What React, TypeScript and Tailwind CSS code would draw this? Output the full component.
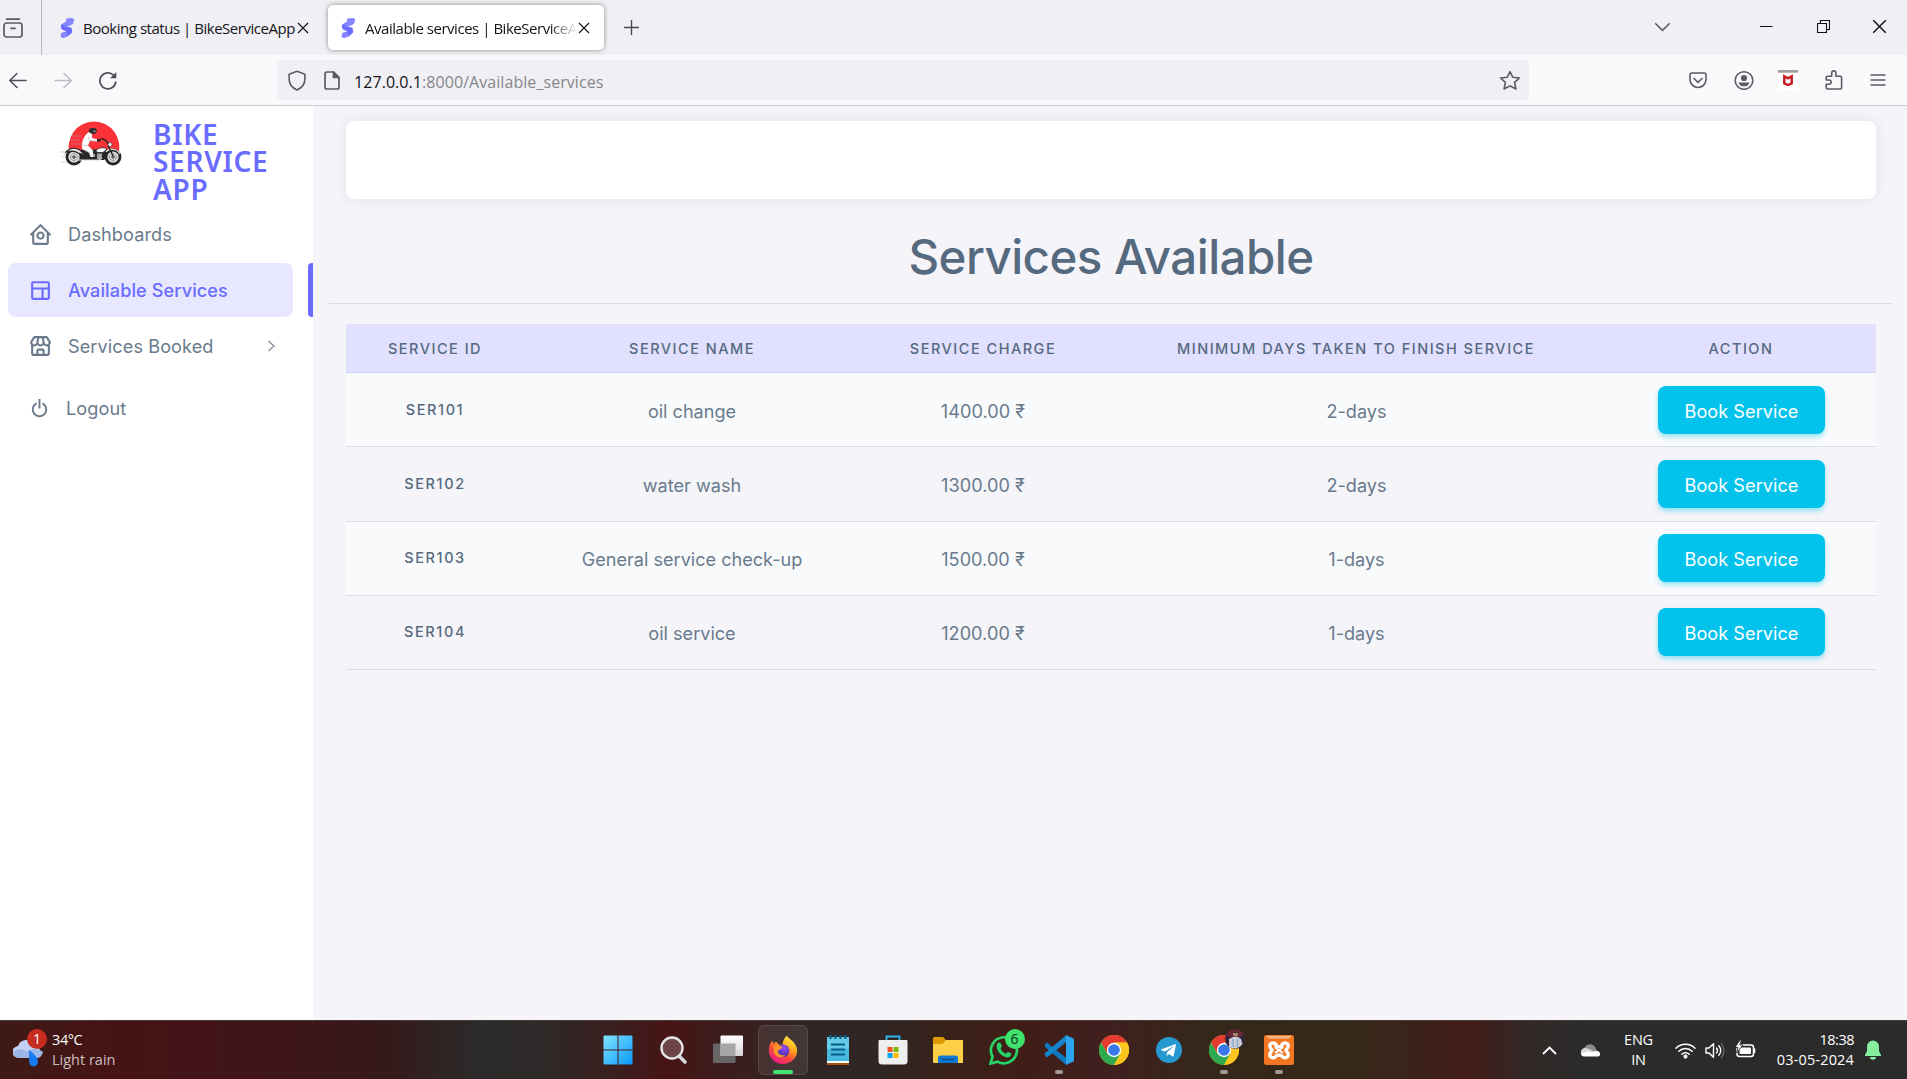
import type { ReactNode } from 'react';
import { BiHomeCircle, BiLayout, BiStore, BiPowerOff } from 'react-icons/bi';
import { FaTelegramPlane } from 'react-icons/fa';

const services = [
  { id: 'SER101', name: 'oil change', charge: '1400.00 ₹', days: '2-days' },
  { id: 'SER102', name: 'water wash', charge: '1300.00 ₹', days: '2-days' },
  { id: 'SER103', name: 'General service check-up', charge: '1500.00 ₹', days: '1-days' },
  { id: 'SER104', name: 'oil service', charge: '1200.00 ₹', days: '1-days' },
];

const columns = 'grid grid-cols-[178px_336px_246px_500px_270px] text-center';

function Favicon() {
  return (
    <svg className="h-5 w-[15px] shrink-0" viewBox="0 0 15 20">
      <path d="M6.2 0.6 12.3 0 14.4 1.6 12.9 6.1 8 8.6 1.2 9.5 1.6 6.2 6 3.6Z" fill="#8587ff" />
      <path d="M1.3 6.2 6 8.6 11.5 9.8 12.3 14.3 8.4 18 2.9 20 0.6 18.5 1.5 14.9 6.6 13.6 2 11.6 0.7 9Z" fill="#696cff" />
      <path d="M1.5 14.9 6 13.6 8.4 18 2.9 20 0.6 18.5Z" fill="#8587ff" />
    </svg>
  );
}

function CloseX({ size = 10 }: { size?: number }) {
  return (
    <svg width={size + 2} height={size + 2} viewBox="0 0 12 12" fill="none" stroke="#15141a" strokeWidth="1.2">
      <path d="M1 1 11 11M11 1 1 11" />
    </svg>
  );
}

function TabBar() {
  return (
    <div className="flex h-[55px] items-center bg-[#f0f0f4]">
      <div className="flex h-full w-[42px] shrink-0 items-center border-r border-[#b9b9be] pl-[3px]">
        <svg width="20" height="20" viewBox="0 0 20 20" fill="none" stroke="#5b5b66" strokeWidth="1.7" strokeLinecap="round">
          <path d="M3.6 1.2H16.4" />
          <rect x="1" y="5" width="18" height="14" rx="2.5" />
          <path d="M8 10.3H12" />
        </svg>
      </div>
      <div className="ml-[18px] flex h-[45px] w-[268px] items-center text-[15px] tracking-[-0.47px] text-[#15141a]">
        <Favicon />
        <span className="ml-[8px] w-[214px] whitespace-nowrap pt-px">Booking status | BikeServiceApp</span>
        <CloseX />
      </div>
      <div className="flex h-[45px] w-[276px] items-center rounded-[5px] bg-white pl-[13px] text-[15px] tracking-[-0.47px] text-[#15141a] shadow-[0_0_5px_rgba(0,0,0,0.42)]">
        <Favicon />
        <span className="ml-[9px] w-[213px] overflow-hidden whitespace-nowrap pt-px [mask-image:linear-gradient(to_right,black_185px,transparent_212px)]">
          Available services | BikeServiceApp
        </span>
        <CloseX />
      </div>
      <svg className="ml-[19px]" width="17" height="17" viewBox="0 0 17 17" fill="none" stroke="#4a4a55" strokeWidth="1.4">
        <path d="M8.5 1V16M1 8.5H16" />
      </svg>
      <div className="ml-auto flex h-[53px] items-center self-start pr-5">
        <svg className="mr-[89px]" width="17" height="10" viewBox="0 0 17 10" fill="none" stroke="#5b5b66" strokeWidth="1.5">
          <path d="M1.2 1.2 8.5 8.4 15.8 1.2" />
        </svg>
        <svg className="mr-[44px]" width="13" height="13" viewBox="0 0 13 13" stroke="#111">
          <path d="M0 6.5H12.5" />
        </svg>
        <svg className="mr-[42px]" width="13" height="13" viewBox="0 0 13 13" fill="none" stroke="#111" strokeWidth="1.1">
          <path d="M.5 3.5H9.5V12.5H.5ZM3.5 3.5V.5H12.5V9.5H9.5" />
        </svg>
        <CloseX size={13} />
      </div>
    </div>
  );
}

function Toolbar() {
  return (
    <div className="flex h-[51px] items-center border-b border-[#c8c8ce] bg-[#f9f9fb] pl-2">
      <svg width="20" height="20" viewBox="0 0 20 20" fill="none" stroke="#4f4f5a" strokeWidth="1.6" strokeLinecap="round" strokeLinejoin="round">
        <path d="M18 10.5H2M9 3.5 1.8 10.5 9 17.5" />
      </svg>
      <svg className="ml-[25px]" width="20" height="20" viewBox="0 0 20 20" fill="none" stroke="#bcbcc2" strokeWidth="1.6" strokeLinecap="round" strokeLinejoin="round">
        <path d="M2 10.5H18M11 3.5 18.2 10.5 11 17.5" />
      </svg>
      <svg className="ml-[25px]" width="20" height="20" viewBox="0 0 20 20" fill="none" stroke="#4f4f5a" strokeWidth="1.7" strokeLinecap="round">
        <path d="M17.8 12A8 8 0 1 1 15.6 5.2" />
        <path d="M18.3 2V8.300H12Z" fill="#4f4f5a" stroke="none" />
      </svg>
      <div className="ml-[159px] flex h-10 w-[1252px] items-center rounded-[5px] bg-[#f0f0f4] pl-[11px] pr-[8px]">
        <svg width="18" height="21" viewBox="0 0 18 21" fill="none" stroke="#5b5b66" strokeWidth="1.6" strokeLinejoin="round">
          <path d="M9 1.2 16.9 4.2V9C16.9 14.2 13.5 18 9 20 4.500 18 1.100 14.200 1.100 9V4.200Z" />
        </svg>
        <svg className="ml-[18px]" width="16" height="19" viewBox="0 0 16 19" fill="none" stroke="#5b5b66" strokeWidth="1.7" strokeLinejoin="round">
          <path d="M3 1H9.500L15 6.500V16.200A1.800 1.800 0 0 1 13.200 18H2.800A1.800 1.800 0 0 1 1 16.200V2.800A1.800 1.800 0 0 1 2.800 1Z" />
          <path d="M9.500 1V6.500H15Z" fill="#5b5b66" />
        </svg>
        <span className="ml-[14px] whitespace-nowrap pt-[3px] text-[16px] tracking-[0.06px] text-[#85858c]">
          <span className="text-[#15141a]">127.0.0.1</span>:8000/Available_services
        </span>
        <svg className="ml-auto" width="22" height="21" viewBox="0 0 22 21" fill="none" stroke="#5b5b66" strokeWidth="1.6" strokeLinejoin="round">
          <path d="M11 1.600 13.700 7.200 20.400 8 15.600 12.400 16.900 19 11 15.900 5.100 19 6.400 12.400 1.600 8 8.300 7.200Z" />
        </svg>
      </div>
      <div className="ml-auto flex items-center pr-[21px]">
        <svg className="mr-[27px]" width="18" height="17" viewBox="0 0 18 17" fill="none" stroke="#5b5b66" strokeWidth="1.6" strokeLinecap="round" strokeLinejoin="round">
          <path d="M2.800 1H15.200A1.800 1.800 0 0 1 17 2.800V7.500A8 8 0 0 1 1 7.500V2.800A1.800 1.800 0 0 1 2.800 1ZM5 6.500 9 10.300 13 6.500" />
        </svg>
        <svg className="mr-[24px]" width="20" height="20" viewBox="0 0 20 20" fill="#5b5b66">
          <circle cx="10" cy="10.500" r="8.800" fill="none" stroke="#5b5b66" strokeWidth="1.600" />
          <circle cx="10" cy="8" r="3.100" />
          <path d="M4.600 12.400H15.400C15 15 12.800 16.300 10 16.300S5 15 4.600 12.400Z" />
        </svg>
        <svg className="mr-[27px]" width="20" height="20" viewBox="0 0 20 20">
          <path d="M0 0H20V20H0Z" fill="#fff" />
          <path d="M0 0H20V2.700H0Z" fill="#a39e9e" />
          <path d="M6.300 6.300 10 8.300 13.700 6.300V13.400L10 15 6.300 13.400Z" fill="none" stroke="#c8191f" strokeWidth="2.400" />
        </svg>
        <svg className="mr-[27px]" width="18" height="20" viewBox="0 0 18 20" fill="none" stroke="#5b5b66" strokeWidth="1.600" strokeLinejoin="round">
          <path d="M2.600 6.200H6.700V3A2.100 2.100 0 0 1 10.900 3V6.200H15.200A1.400 1.400 0 0 1 16.600 7.600V17.600A1.400 1.400 0 0 1 15.200 19H2.600A1.400 1.400 0 0 1 1.200 17.600V14.200H4A2 2 0 0 0 4 10H1.200V7.600A1.400 1.400 0 0 1 2.600 6.200Z" />
        </svg>
        <svg width="16" height="12" viewBox="0 0 16 12" stroke="#5b5b66" strokeWidth="1.500">
          <path d="M.5 1H15.500M.5 6H15.500M.5 11H15.500" />
        </svg>
      </div>
    </div>
  );
}

function Wheel({ cx }: { cx: number }) {
  return (
    <>
      <circle cx={cx} cy="36" r="7" fill="#e8e6e6" stroke="#272527" strokeWidth="2.800" />
      <circle cx={cx} cy="36" r="3.600" fill="none" stroke="#8b8888" strokeWidth=".8" />
      <circle cx={cx} cy="36" r="1.700" fill="#272527" />
      <path d={`M${cx - 6} 36H${cx + 6}M${cx} 30V42`} stroke="#9b9898" strokeWidth=".6" />
    </>
  );
}

function BikeLogo() {
  return (
    <svg className="h-[45px] w-[62px] shrink-0" viewBox="0 0 62 45">
      <path d="M10 34A25.300 25.500 0 1 1 58 34Z" fill="#fb3338" />
      <path d="M0 31H14M2 36H12M1 41H18M4 33.500H10M12 15H22M10 19H20M11 23H22" stroke="#aaa4a5" strokeWidth=".7" opacity=".7" />
      <path d="M14 33 20 29 46 28 50 33 44 39 20 39 14 36Z" fill="#2a282a" />
      <Wheel cx={14} />
      <Wheel cx={53} />
      <path d="M6 31C10 26 17 26 22 31L26 34 18 32C14 29 10 30 6 31Z" fill="#e9e7e7" stroke="#272527" strokeWidth="1.200" />
      <path d="M46 31C49 27 57 27 60 33" fill="none" stroke="#f1f1f1" strokeWidth="1.200" />
      <path d="M20 29.500 33 28.500 36 30 26 32Z" fill="#272527" />
      <path d="M36 29.500C39 26 44 26 47 28L43 31.500H37Z" fill="#f8f8f8" stroke="#272527" strokeWidth=".8" />
      <path d="M31 33H35V38H31ZM37 32.500H42V38H37Z" fill="#a8a5a6" />
      <path d="M17 39H39L42 37" fill="none" stroke="#ddd" strokeWidth="1.200" />
      <path d="M48 24 53 35M48 23C47 20 45 18 41 17.500" fill="none" stroke="#272527" strokeWidth="1.400" />
      <circle cx="50" cy="23.500" r="2" fill="#fff" stroke="#444" strokeWidth=".7" />
      <path d="M29 11 32 12.500 32 17 38 18.500 37 20.500 30 20 28 24.500 22 24.500C22 20 24 14 29 11Z" fill="#fdfdfd" />
      <path d="M22 24 28 24.500 33 29.500 33 36.500 31 37 29 31.500 22 28Z" fill="#fdfdfd" stroke="#bbb" strokeWidth=".4" />
      <path d="M28 16 30 19.500 37 20" fill="none" stroke="#aaa" strokeWidth=".7" />
      <path d="M37 18 41 18 40 21 37 20.500Z" fill="#272527" />
      <path d="M30 36H35L37 38H30Z" fill="#272527" />
      <path d="M29 11C28 8.500 30 7 33 7 36 7 37.500 8.500 36.500 11L35 13 31 12.500Z" fill="#302d30" />
      <path d="M33 9.500H36V11H33Z" fill="#8b7776" />
    </svg>
  );
}

function MenuItem({ icon, label, active, arrow }: { icon: ReactNode; label: string; active?: boolean; arrow?: boolean }) {
  return (
    <div className="flex h-[54px] items-stretch justify-between">
      <div
        className={
          active
            ? 'ml-2 flex w-[285px] items-center rounded-lg bg-[#e7e7ff] pl-5 font-medium text-[#696cff]'
            : 'ml-2 flex w-[285px] items-center rounded-lg pl-5 text-[#697a8d]'
        }
      >
        <span className="w-[40px] text-[25px]">{icon}</span>
        <span className="whitespace-nowrap pt-[2px] text-[18.1px] tracking-[0.1px]">{label}</span>
        {arrow && (
          <svg className="ml-auto mr-[17px]" width="9" height="12" viewBox="0 0 9 12" fill="none" stroke="#8b98a7" strokeWidth="1.500">
            <path d="M1.500 1 7 6 1.500 11" />
          </svg>
        )}
      </div>
      {active && <div className="w-[5px] rounded-l-[4px] bg-[#696cff]" />}
    </div>
  );
}

function Sidebar() {
  return (
    <aside className="w-[313px] shrink-0 bg-white font-[Inter,sans-serif]">
      <div className="flex h-[101px] pl-[60px] pt-[15px]">
        <BikeLogo />
        <div className="ml-[31px] w-[130px] font-['Noto_Sans',sans-serif] text-[28px] font-semibold leading-[27.4px] tracking-[0.7px] text-[#696cff]">
          BIKE SERVICE APP
        </div>
      </div>
      <nav className="flex flex-col gap-[2px]">
        <MenuItem icon={<BiHomeCircle />} label="Dashboards" />
        <MenuItem icon={<BiLayout />} label="Available Services" active />
        <MenuItem icon={<BiStore />} label="Services Booked" arrow />
      </nav>
      <div className="mt-[22px] flex h-[26px] items-center pl-[28px] text-[18.1px] tracking-[0.1px] text-[#697a8d]">
        <BiPowerOff className="mr-[15px] text-[23px]" />
        <span className="pt-[2px]">Logout</span>
      </div>
    </aside>
  );
}

function Content() {
  return (
    <main className="grow font-[Inter,sans-serif] text-[#697a8d]">
      <div className="mx-[33px] mt-[15px] h-[78px] rounded-lg bg-white shadow-[0_0_12px_rgba(161,172,184,0.24)]" />
      <h1 className="mt-[28px] h-[60px] text-center text-[47.5px] font-medium leading-[60px] tracking-[-0.55px] text-[#566a7f]">Services Available</h1>
      <hr className="ml-[16px] mr-[17px] mt-[16px] border-[#d9dee3]" />
      <div className="mx-[33px] mt-5 w-[1530px]">
        <div className={`${columns} h-[49px] items-center border-b border-[#cfd0f2] bg-[#e1e1ff] pt-[2px] text-[14.5px] font-medium tracking-[1.5px] text-[#566a7f]`}>
          <div>SERVICE ID</div>
          <div>SERVICE NAME</div>
          <div>SERVICE CHARGE</div>
          <div>MINIMUM DAYS TAKEN TO FINISH SERVICE</div>
          <div>ACTION</div>
        </div>
        {services.map((s) => (
          <div
            key={s.id}
            className={`${columns} h-[74px] items-start border-b border-[#d9dee3] pt-[13px] text-[18.1px] leading-[50px] odd:bg-[#f4f4f9] even:bg-[#f9fafc] nth-[3]:h-[75px] nth-[n+4]:pt-[12px]`}
          >
            <div className="text-[14.5px] font-medium leading-[48px] tracking-[1.6px] text-[#566a7f]">{s.id}</div>
            <div>{s.name}</div>
            <div className="tracking-[0.05px]">{s.charge}</div>
            <div className="pl-px">{s.days}</div>
            <div className="flex justify-center">
              <button className="h-12 w-[167px] rounded-lg bg-[#03c3ec] pl-px tracking-[0.05px] text-white shadow-[0_3px_5px_rgba(3,195,236,0.4)]">
                Book Service
              </button>
            </div>
          </div>
        ))}
      </div>
    </main>
  );
}

function Slot({ children, running, active }: { children: ReactNode; running?: boolean; active?: boolean }) {
  return (
    <div className="relative flex h-[58px] w-[55.15px] items-center justify-center">
      {active && <div className="absolute inset-x-[2.5px] bottom-[4px] top-[4px] rounded-[6px] border border-white/10 bg-white/8" />}
      <div className="relative h-[30px] w-[30px]">{children}</div>
      {active && <div className="absolute bottom-[5px] h-[4px] w-5 rounded-full bg-[#41e56c]" />}
      {running && <div className="absolute bottom-[5px] h-[4px] w-2 rounded-full bg-[#a09a98]" />}
    </div>
  );
}

function Chrome() {
  return (
    <svg viewBox="0 0 30 30" className="h-[30px] w-[30px]">
      <circle cx="15" cy="15" r="15" fill="#fbc116" />
      <path d="M2 7.500A15 15 0 0 1 28 7.500H15L8.500 18.700Z" fill="#e33b2e" />
      <path d="M2 7.500A15 15 0 0 0 15 30L21.500 18.750 8.500 18.750Z" fill="#2da94f" />
      <path d="M28 7.500H15A7.500 7.500 0 0 1 21.500 18.750L15 30A15 15 0 0 0 28 7.500Z" fill="#fcc61e" />
      <circle cx="15" cy="15" r="7.200" fill="#fff" />
      <circle cx="15" cy="15" r="5.800" fill="#3b78e7" />
    </svg>
  );
}

function TaskIcons() {
  return (
    <div className="flex">
      <Slot>
        <svg viewBox="0 0 30 30">
          <defs>
            <linearGradient id="win" x1="0" y1="0" x2="1" y2="1">
              <stop offset="0" stopColor="#83e3ff" />
              <stop offset="1" stopColor="#0899fb" />
            </linearGradient>
          </defs>
          <path d="M.5 1.500A1 1 0 0 1 1.500.5H14.500V14.500H.5ZM15.500.5H28.500A1 1 0 0 1 29.500 1.500V14.500H15.500ZM.5 15.500H14.500V29.500H1.500A1 1 0 0 1 .5 28.500ZM15.500 15.500H29.500V28.500A1 1 0 0 1 28.500 29.500H15.500Z" fill="url(#win)" />
        </svg>
      </Slot>
      <Slot>
        <svg viewBox="0 0 30 30" fill="none">
          <path d="M20.500 20.500 27 27" stroke="#d6d9dd" strokeWidth="3.600" strokeLinecap="round" />
          <circle cx="14" cy="13" r="10.500" fill="#6d4547" stroke="#e4e4e6" strokeWidth="2.400" />
        </svg>
      </Slot>
      <Slot>
        <svg viewBox="0 0 30 30">
          <defs>
            <linearGradient id="tv" x1="0" y1="0" x2="0" y2="1">
              <stop offset="0" stopColor="#fff" />
              <stop offset="1" stopColor="#d5d5d5" />
            </linearGradient>
          </defs>
          <rect x="0" y="8.500" width="22.500" height="19.500" rx="1" fill="#666" />
          <rect x="7.500" y=".5" width="22.500" height="20.500" rx="1" fill="url(#tv)" />
          <path d="M7.500 8.500H22.500V21H7.500Z" fill="#a7a7a7" />
        </svg>
      </Slot>
      <Slot active>
        <svg viewBox="0 0 30 30">
          <defs>
            <linearGradient id="fox" x1=".85" y1="0" x2=".25" y2="1">
              <stop offset="0" stopColor="#fff44f" />
              <stop offset=".35" stopColor="#ffb01e" />
              <stop offset=".65" stopColor="#ff4a3a" />
              <stop offset="1" stopColor="#e3158c" />
            </linearGradient>
            <radialGradient id="globe" cx=".6" cy=".3">
              <stop offset="0" stopColor="#a04bff" />
              <stop offset="1" stopColor="#5439b8" />
            </radialGradient>
          </defs>
          <path d="M19 .5C20 4 26 5 28.500 12 31 21 24.500 29 15 29 7 29 .8 23 .8 15.500.8 11 2.500 7.500 4.500 5.500L5.500 9 8 6.500 10.500 9.500 14.500 10C15 5.500 16 3 19 .5Z" fill="url(#fox)" />
          <circle cx="15" cy="15.800" r="6.300" fill="url(#globe)" />
          <path d="M5.500 12C8 9.500 12 9.500 14.500 12.500 13 14.500 10.500 14 10 16 10 20 14 21 17.500 20 13 24.500 6.500 22 5.500 16Z" fill="#ff942b" />
        </svg>
      </Slot>
      <Slot>
        <svg viewBox="0 0 30 30">
          <path d="M4 2H26V28H4Z" fill="#48b9dc" />
          <path d="M4 2H26V14H4Z" fill="#66cbe9" />
          <path d="M4 26H26V28H4Z" fill="#fff" />
          <path d="M4 28H26V30H4Z" fill="#a65312" />
          <path d="M7.500 0V4M12.500 0V4M17.500 0V4M22.500 0V4" stroke="#075e86" strokeWidth="2.200" />
          <path d="M8 9.500H22M8 14.500H22M8 19.500H22" stroke="#075e86" strokeWidth="1.800" />
        </svg>
      </Slot>
      <Slot>
        <svg viewBox="0 0 30 30">
          <path d="M8.500 6V1.500H21.500V6" fill="none" stroke="#2db5ef" strokeWidth="1.800" />
          <path d="M.5 6A1 1 0 0 1 1.500 5H28.500A1 1 0 0 1 29.500 6V26A3.500 3.500 0 0 1 26 29.500H4A3.500 3.500 0 0 1 .5 26Z" fill="#efefef" />
          <path d="M9.500 12H14.500V17H9.500Z" fill="#f25022" />
          <path d="M15.500 12H20.500V17H15.500Z" fill="#7fba00" />
          <path d="M9.500 18H14.500V23H9.500Z" fill="#00a4ef" />
          <path d="M15.500 18H20.500V23H15.500Z" fill="#ffb900" />
        </svg>
      </Slot>
      <Slot>
        <svg viewBox="0 0 30 30">
          <path d="M0 3.500A1.500 1.500 0 0 1 1.500 2H10L13 5H29A1 1 0 0 1 30 6V12H0Z" fill="#dd9a05" />
          <path d="M0 9H9.500L13 5H29A1 1 0 0 1 30 6V28H1A1 1 0 0 1 0 27Z" fill="#ffcf48" />
          <path d="M5 28V23A2.500 2.500 0 0 1 7.500 20.500H22.500A2.500 2.500 0 0 1 25 23V28Z" fill="#1079cf" />
          <path d="M9 24.500H21" stroke="#0a4d91" strokeWidth="1.500" />
        </svg>
      </Slot>
      <Slot>
        <svg viewBox="0 0 30 30" fill="none">
          <path d="M1.500 28.500 3.500 21.500A13 13 0 1 1 8.500 26.600Z" stroke="#26d366" strokeWidth="2.700" />
          <path d="M9.500 7.500C11.500 7 12 8.500 13 11.200L11.500 13.500C13 16.500 15 18 17 18.800L18.800 16.800 22.500 18.800C22 22 19.500 22.800 17.500 22.300 12 21 8.500 16.500 7.800 12.500 7.600 10 8 8.500 9.500 7.500Z" fill="#26d366" />
        </svg>
        <div className="absolute -top-[6px] left-[16px] h-5 w-5 rounded-full bg-[#3ee26c] text-center text-[14px] leading-5 text-[#12301b]">6</div>
      </Slot>
      <Slot running>
        <svg viewBox="0 0 30 30">
          <path d="M.8 9.500 3 7.500 23.500 24V29.500L22 29.800.8 11.800Z" fill="#0d78bd" />
          <path d="M.8 20.500 3 22.500 23.500 6V.5L22 .2.8 18.200Z" fill="#1584cb" />
          <path d="M22 .2 28.500 3A2 2 0 0 1 30 5V25A2 2 0 0 1 28.500 27L22 29.800Z" fill="#2ba4ee" />
        </svg>
      </Slot>
      <Slot>
        <Chrome />
      </Slot>
      <Slot>
        <div className="m-[2px] flex h-[26px] w-[26px] items-center justify-center rounded-full bg-[#2599d0] pr-[1px] text-[17px] text-white">
          <FaTelegramPlane />
        </div>
      </Slot>
      <Slot running>
        <Chrome />
        <svg className="absolute -top-[6px] left-[16px] h-5 w-5" viewBox="0 0 20 20">
          <circle cx="10" cy="10" r="10" fill="#302538" />
          <path d="M1 6A10 10 0 0 1 19 6L15 8H5Z" fill="#672735" />
          <path d="M4 10 8 8H13L16 10 17.500 15A10 10 0 0 1 4 18Z" fill="#c9cdd8" />
          <path d="M8 10V18M12.500 10V18" stroke="#86a8cb" strokeWidth="1.300" />
          <circle cx="10.500" cy="5" r="2.600" fill="#a87e6c" />
          <path d="M8 4C8 1.500 13 1.500 13 4Z" fill="#4a2d24" />
        </svg>
      </Slot>
      <Slot running>
        <svg viewBox="0 0 30 30">
          <rect width="30" height="30" rx="2.500" fill="#f37623" />
          <path d="M2 1H28L25 3.500H5Z" fill="#fbb98b" />
          <path
            d="M12 9.200C9.500 7 5.800 8 5.800 11 5.800 13.500 8 13.800 8 15.200 8 16.600 5.800 17 5.800 19.600 5.800 23 10 23.800 12 21.200 13.500 19.600 16.500 19.600 18 21.200 20 23.800 24.200 23 24.200 19.600 24.200 17 22 16.600 22 15.200 22 13.800 24.200 13.500 24.200 11 24.200 8 20.500 7 18 9.200V11.600H12Z"
            fill="#f37623"
            stroke="#fff"
            strokeWidth="3.400"
            strokeLinejoin="round"
          />
          <path d="M11 12.500 19 18M19 12.500 11 18" stroke="#fff" strokeWidth="2" />
        </svg>
      </Slot>
    </div>
  );
}

function Weather() {
  return (
    <div className="flex w-[590px] items-center pl-[13px]">
      <div className="relative h-[36px] w-[34px]">
        <svg viewBox="0 0 34 36">
          <path d="M6 26A6 6 0 0 1 5 14 9 9 0 0 1 21 12 8 8 0 0 1 24 26Z" fill="#c3d2f3" />
          <path d="M6 26A6 6 0 0 1 0 20C5 16 11 17 13 20 17 16 26 16 30 20 29 24 27 26 24 26Z" fill="#9db6e8" />
          <path d="M16 18C20 21 25 25 25 30A4.400 4.400 0 0 1 16.200 30Z" fill="#177cf4" />
        </svg>
        <div className="absolute -top-[3px] left-[14px] h-5 w-5 rounded-full bg-[#c72c1f] text-center text-[14px] leading-5 text-white">1</div>
      </div>
      <div className="ml-[5px] text-[14.500px] leading-5 text-white">
        <div className="tracking-[-0.4px]">34°C</div>
        <div className="text-[#cdbfc0]">Light rain</div>
      </div>
    </div>
  );
}

function Tray() {
  return (
    <div className="ml-auto flex items-center text-[14.500px] leading-5 text-white">
      <svg className="mr-[23px]" width="15" height="9" viewBox="0 0 15 9" fill="none" stroke="#fff" strokeWidth="1.800">
        <path d="M1 8 7.500 1.500 14 8" />
      </svg>
      <svg className="mr-[24px]" width="20" height="14" viewBox="0 0 20 14">
        <path d="M4 9A6 6 0 0 1 16 6L18 10H4Z" fill="#8c8c8c" />
        <path d="M4 13A4 4 0 0 1 3 5.500C8 4 10 7 14 9 18 6 21 10 19 13Z" fill="#d6d6d6" />
        <path d="M1 11C5 8 9 8 12 9.500 16 7 20 8 20 11A2.500 2.500 0 0 1 17.500 13.500H4C2.500 13.500 1.200 12.500 1 11Z" fill="#fff" />
      </svg>
      <div className="mr-[22px] w-[29px] text-center tracking-[-0.2px]">ENG IN</div>
      <svg className="mr-[9px]" width="21" height="17" viewBox="0 0 21 17" fill="none" stroke="#fff" strokeWidth="1.500" strokeLinecap="round">
        <path d="M1 6.200A13.400 13.400 0 0 1 20 6.200M3.800 9.300A9.500 9.500 0 0 1 17.200 9.300M6.800 12.200A5.200 5.200 0 0 1 14.200 12.200" />
        <circle cx="10.500" cy="14.600" r="1.300" fill="#fff" />
      </svg>
      <svg className="mr-[9px]" width="21" height="17" viewBox="0 0 21 17" fill="none" stroke="#fff" strokeWidth="1.400" strokeLinecap="round" strokeLinejoin="round">
        <path d="M1 6H4L8.500 1.800V15.200L4 11H1ZM11.500 6A4 4 0 0 1 11.500 11M13.800 3.700A7 7 0 0 1 13.800 13.300" />
        <path d="M16.300 1.500A10.500 10.500 0 0 1 16.300 15.500" stroke="#666" />
      </svg>
      <svg className="mb-[3px]" width="21" height="18" viewBox="0 0 21 18" fill="none">
        <rect x="2" y="5" width="16.500" height="11.500" rx="2.500" stroke="#fff" strokeWidth="1.500" />
        <path d="M18.500 8.500H20.300V13H18.500Z" fill="#fff" />
        <rect x="4.500" y="7.500" width="11.500" height="6.500" rx="1" fill="#fff" />
        <path d="M5 0 0 7.500H3L1.500 13 8 5H4.800L6.500 0Z" fill="#fff" stroke="#2b2b2b" strokeWidth=".9" />
      </svg>
      <div className="w-[98px] text-right">
        <div className="tracking-[-0.5px]">18:38</div>
        <div className="tracking-[0.15px]">03-05-2024</div>
      </div>
      <svg className="ml-[11px] mr-[26px]" width="16" height="20" viewBox="0 0 16 20" fill="#86ee9f">
        <path d="M8 .5A6 6 0 0 1 14 6.500V11L16 15V16H0V15L2 11V6.500A6 6 0 0 1 8 .5ZM5 17H11A3 2.700 0 0 1 5 17Z" />
      </svg>
    </div>
  );
}

export default function App() {
  return (
    <div className="flex h-[1079px] w-[1907px] flex-col overflow-hidden bg-[#f4f4f9] font-['Open_Sans',sans-serif]">
      <TabBar />
      <Toolbar />
      <div className="flex h-[914px] shrink-0">
        <Sidebar />
        <Content />
      </div>
      <div className="flex h-[59px] shrink-0 border-t border-[#453a38] bg-[linear-gradient(90deg,#3f1a14_0%,#451316_6%,#401518_14%,#36191a_20%,#2c2a2a_25%,#2d2a29_28%,#39201f_32%,#471416_35%,#3c1d1c_38%,#322625_42%,#302624_46%,#3a2219_50%,#401d17_54%,#40201f_58%,#352719_63%,#352818_70%,#38261a_73%,#431c18_77%,#322827_80%,#2b2b2b_83%,#2b2b2b_100%)]">
        <Weather />
        <TaskIcons />
        <Tray />
      </div>
    </div>
  );
}
